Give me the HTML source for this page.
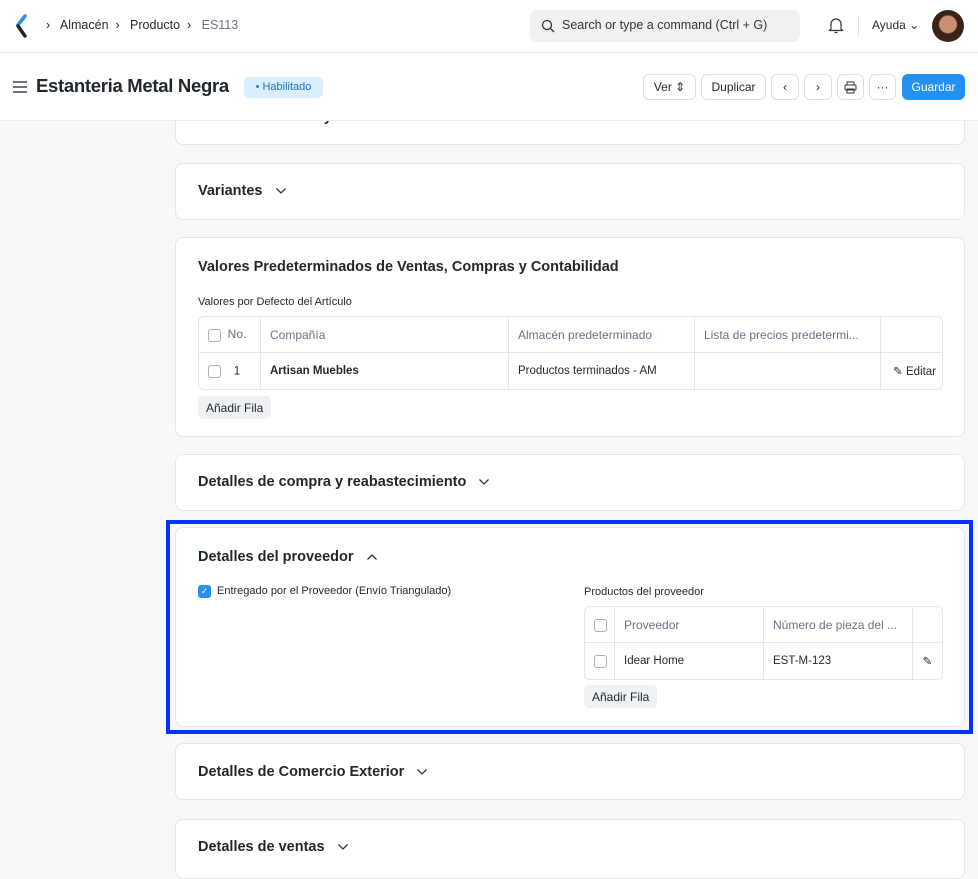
<!DOCTYPE html>
<html><head><meta charset="utf-8"><style>
*{box-sizing:border-box;margin:0;padding:0}
body{width:978px;height:854px;overflow:hidden;background:#f8f8f8;font-family:"Liberation Sans",sans-serif;color:#1f272e;position:relative}
.abs{position:absolute}
.nav{left:0;top:0;width:978px;height:53px;background:#fff;border-bottom:1px solid #e8e8e8}
.hdr{left:0;top:53px;width:978px;height:68px;background:#fff;border-bottom:1px solid #ececec;z-index:5}
.card{position:absolute;left:175px;width:790px;background:#fff;border:1px solid #e4e6e9;border-radius:8px}
.ct{position:absolute;left:22px;font-size:14.5px;font-weight:bold;color:#1f272e;white-space:nowrap}
.chev{display:inline-block;margin-left:8px;vertical-align:middle}
.btn{position:absolute;top:74px;height:26px;border:1px solid #dcdfe3;border-radius:6px;background:#fff;font-size:12px;display:flex;align-items:center;justify-content:center;color:#1f272e;z-index:6}
table{border-collapse:separate;border-spacing:0;border:1px solid #e4e6e9;border-radius:6px;position:absolute;font-size:11.5px;table-layout:fixed}
td{border-right:1px solid #e4e6e9;border-bottom:1px solid #e4e6e9;height:36px;padding:0 9px;color:#1f272e;white-space:nowrap;overflow:hidden}
tr:last-child td{border-bottom:none}
td:last-child{border-right:none}
.h td{color:#6b7280;font-size:12px}
.cb{display:inline-block;width:13px;height:13px;border:1px solid #aab0b6;border-radius:3px;vertical-align:middle}
.add{position:absolute;height:23px;padding:0 8px;background:#f0f1f2;border-radius:5px;font-size:12px;display:flex;align-items:center}
</style></head><body>
<div class="abs nav"></div>
<svg class="abs" style="left:14px;top:14px" width="16" height="24" viewBox="0 0 16 24"><path d="M11 2 L4 11" stroke="#2490ef" stroke-width="3.5" stroke-linecap="round"/><path d="M4 12 L11 22" stroke="#1f272e" stroke-width="3.5" stroke-linecap="round"/></svg>
<div class="abs" style="left:46px;top:18px;font-size:12.5px;color:#1f272e;white-space:nowrap">›&nbsp;&nbsp; Almacén &nbsp;›&nbsp;&nbsp; Producto &nbsp;›&nbsp;&nbsp; <span style="color:#6b7280">ES113</span></div>
<div class="abs" style="left:530px;top:10px;width:270px;height:32px;background:#f0f1f2;border-radius:7px"></div>
<svg class="abs" style="left:541px;top:19px" width="14" height="14" viewBox="0 0 14 14"><circle cx="6" cy="6" r="4.5" stroke="#333" stroke-width="1.3" fill="none"/><path d="M9.5 9.5L13 13" stroke="#333" stroke-width="1.3"/></svg>
<div class="abs" style="left:562px;top:18px;font-size:12.5px;color:#333">Search or type a command (Ctrl + G)</div>
<svg class="abs" style="left:828px;top:16px" width="16" height="18" viewBox="0 0 16 18"><path d="M3 13V8a5 5 0 0 1 10 0v5l1.5 1.5h-13z" stroke="#333" stroke-width="1.2" fill="none"/><path d="M6.5 16.5h3" stroke="#333" stroke-width="1.2"/></svg>
<div class="abs" style="left:858px;top:15px;width:1px;height:22px;background:#e2e2e2"></div>
<div class="abs" style="left:872px;top:18px;font-size:12px">Ayuda ⌄</div>
<div class="abs" style="left:932px;top:10px;width:32px;height:32px;border-radius:50%;background:radial-gradient(circle at 50% 45%,#c89070 0 35%,#3a2418 40%)"></div>

<div class="abs hdr"></div>
<div class="abs" style="z-index:6;left:13px;top:81px;width:14px;height:12px;border-top:2px solid #6b7280;border-bottom:2px solid #6b7280"><div style="margin-top:3px;height:2px;background:#6b7280"></div></div>
<div class="abs" style="z-index:6;left:36px;top:75px;font-size:18.5px;font-weight:bold;letter-spacing:-0.3px;white-space:nowrap">Estanteria Metal Negra</div>
<div class="abs" style="z-index:6;left:244px;top:77px;height:21px;width:79px;text-align:center;background:#dbeefe;border-radius:5px;color:#1c72c4;font-size:11px;line-height:21px">• Habilitado</div>
<div class="btn" style="left:643px;width:53px">Ver ⇕</div>
<div class="btn" style="left:701px;width:65px">Duplicar</div>
<div class="btn" style="left:771px;width:28px">‹</div>
<div class="btn" style="left:804px;width:28px">›</div>
<div class="btn" style="left:837px;width:27px"><svg width="13" height="13" viewBox="0 0 13 13"><rect x="3" y="1" width="7" height="3" fill="none" stroke="#333"/><rect x="1" y="4" width="11" height="5" rx="1" fill="none" stroke="#333"/><rect x="3" y="8" width="7" height="4" fill="none" stroke="#333"/></svg></div>
<div class="btn" style="left:869px;width:27px">···</div>
<div class="btn" style="left:902px;width:63px;background:#2490ef;border-color:#2490ef;color:#fff">Guardar</div>

<div class="card" style="top:100px;height:45px"><div class="ct" style="top:8px">Números de serie y lotes</div></div>
<div class="card" style="top:163px;height:57px"><div class="ct" style="top:19px">Variantes <svg class="chev" width="12" height="8" viewBox="0 0 12 8"><path d="M1.5 1.5 6 6l4.5-4.5" stroke="#333" stroke-width="1.3" fill="none"/></svg></div></div>
<div class="card" style="top:237px;height:200px">
<div class="ct" style="top:21px">Valores Predeterminados de Ventas, Compras y Contabilidad</div>
<div class="abs" style="left:22px;top:58px;font-size:11px">Valores por Defecto del Artículo</div>
<table style="left:22px;top:78px;width:745px">
<colgroup><col style="width:62px"><col style="width:248px"><col style="width:186px"><col style="width:186px"><col style="width:61px"></colgroup>
<tr class="h"><td><span class="cb"></span>&nbsp; No.</td><td>Compañía</td><td>Almacén predeterminado</td><td>Lista de precios predetermi...</td><td></td></tr>
<tr><td><span class="cb"></span>&nbsp;&nbsp;&nbsp; 1</td><td style="font-weight:bold">Artisan Muebles</td><td>Productos terminados - AM</td><td></td><td style="text-align:right;padding:0 6px 0 0">✎ Editar</td></tr>
</table>
<div class="add" style="left:22px;top:158px">Añadir Fila</div>
</div>
<div class="card" style="top:454px;height:57px"><div class="ct" style="top:19px">Detalles de compra y reabastecimiento <svg class="chev" width="12" height="8" viewBox="0 0 12 8"><path d="M1.5 1.5 6 6l4.5-4.5" stroke="#333" stroke-width="1.3" fill="none"/></svg></div></div>
<div class="card" style="top:527px;height:200px">
<div class="ct" style="top:21px">Detalles del proveedor <svg class="chev" width="12" height="8" viewBox="0 0 12 8"><path d="M1.5 6.5 6 2l4.5 4.5" stroke="#333" stroke-width="1.3" fill="none"/></svg></div>
<div class="abs" style="left:22px;top:57px;width:13px;height:13px;background:#2490ef;border-radius:3px;color:#fff;font-size:9px;text-align:center;line-height:13px">✓</div>
<div class="abs" style="left:41px;top:57px;font-size:11px">Entregado por el Proveedor (Envío Triangulado)</div>
<div class="abs" style="left:408px;top:58px;font-size:11px">Productos del proveedor</div>
<table style="left:408px;top:78px;width:359px">
<colgroup><col style="width:30px"><col style="width:149px"><col style="width:149px"><col style="width:29px"></colgroup>
<tr class="h"><td><span class="cb"></span></td><td>Proveedor</td><td>Número de pieza del ...</td><td></td></tr>
<tr><td><span class="cb"></span></td><td>Idear Home</td><td>EST-M-123</td><td style="text-align:center;padding:0">✎</td></tr>
</table>
<div class="add" style="left:408px;top:157px">Añadir Fila</div>
</div>
<div class="abs" style="left:166px;top:520px;width:807px;height:214px;border:4px solid #0433ff"></div>
<div class="card" style="top:743px;height:57px"><div class="ct" style="top:20px">Detalles de Comercio Exterior <svg class="chev" width="12" height="8" viewBox="0 0 12 8"><path d="M1.5 1.5 6 6l4.5-4.5" stroke="#333" stroke-width="1.3" fill="none"/></svg></div></div>
<div class="card" style="top:819px;height:60px"><div class="ct" style="top:19px">Detalles de ventas <svg class="chev" width="12" height="8" viewBox="0 0 12 8"><path d="M1.5 1.5 6 6l4.5-4.5" stroke="#333" stroke-width="1.3" fill="none"/></svg></div></div>
</body></html>
